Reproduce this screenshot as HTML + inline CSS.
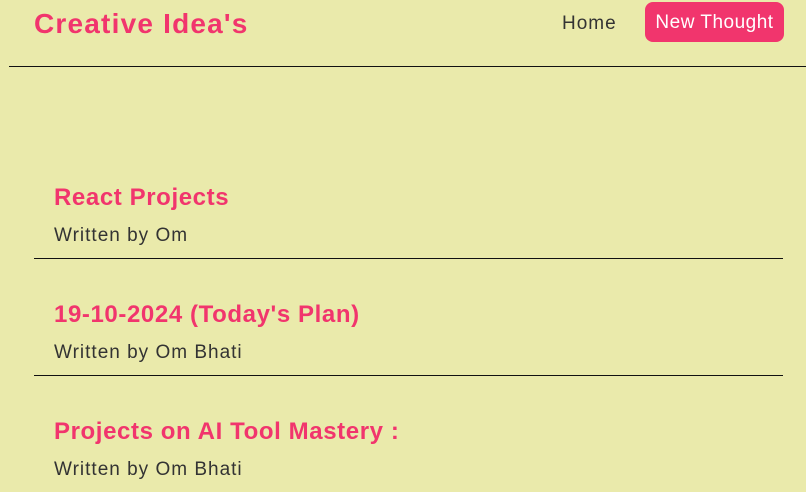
<!DOCTYPE html>
<html><head><style>
html,body{margin:0;padding:0;background:#eaeaab;width:806px;height:492px;overflow:hidden;font-family:"Liberation Sans",sans-serif;color:#333}
.t{position:absolute;white-space:nowrap}
.logo{left:34px;top:6px;font-size:28px;font-weight:bold;color:#f1356d;line-height:36px;letter-spacing:1.2px}
.home{left:562px;top:12px;font-size:19px;line-height:24px;color:#333;letter-spacing:1px}
.btn{position:absolute;left:645px;top:2px;width:139px;height:40px;background:#f1356d;border-radius:8px;color:#fff;font-size:19px;line-height:42px;text-align:center;letter-spacing:0.5px}
.hr{position:absolute;height:1px;background:#111}
.pt{left:54px;font-size:24px;font-weight:bold;color:#f1356d;line-height:30px;letter-spacing:0.6px}
.pw{left:54px;font-size:19px;line-height:24px;color:#333;letter-spacing:1px}
</style></head><body>
<div class="t logo">Creative Idea's</div>
<div class="t home">Home</div>
<div class="btn">New Thought</div>
<div class="hr" style="left:9px;top:66px;width:797px"></div>

<div class="t pt" style="top:183px">React Projects</div>
<div class="t pw" style="top:224px">Written by Om</div>
<div class="hr" style="left:34px;top:258px;width:749px"></div>

<div class="t pt" style="top:300px">19-10-2024 (Today's Plan)</div>
<div class="t pw" style="top:341px">Written by Om Bhati</div>
<div class="hr" style="left:34px;top:375px;width:749px"></div>

<div class="t pt" style="top:417px">Projects on AI Tool Mastery :</div>
<div class="t pw" style="top:458px">Written by Om Bhati</div>
</body></html>
